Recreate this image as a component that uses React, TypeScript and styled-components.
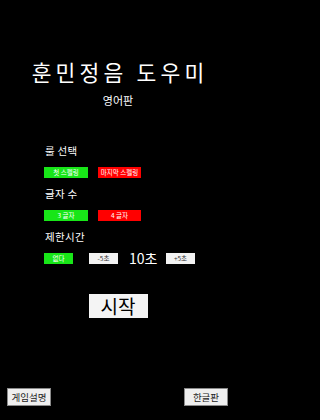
import React, { useState } from 'react';
import styled, { createGlobalStyle } from 'styled-components';

const GlobalStyle = createGlobalStyle`
  html, body {
    margin: 0;
    padding: 0;
    background: #000;
  }
  body {
    font-family: 'Noto Sans CJK KR', 'Noto Sans', sans-serif;
  }
`;

const Page = styled.div`
  width: 236px;
  height: 420px;
  background: #000;
  color: #fff;
  display: flex;
  flex-direction: column;
  box-sizing: border-box;
  overflow: hidden;
`;

const Header = styled.header`
  display: flex;
  flex-direction: column;
  align-items: center;
  padding-top: 57px;
`;

const Title = styled.h1`
  margin: 0;
  font-size: 21.5px;
  font-weight: 400;
  line-height: 30px;
  letter-spacing: 4.2px;
  padding-left: 4.2px;
  white-space: nowrap;
`;

const SubTitle = styled.div`
  margin-top: 6px;
  font-size: 11px;
  line-height: 14px;
`;

const Settings = styled.section`
  display: flex;
  flex-direction: column;
  padding: 0 0 0 44px;
  margin-top: 37px;
`;

const Label = styled.div`
  font-size: 10.5px;
  line-height: 14px;
  margin-left: 1px;
  letter-spacing: 0.3px;
`;

const Row = styled.div<{ $gap?: number }>`
  display: flex;
  align-items: center;
  gap: ${(p) => p.$gap ?? 10}px;
  margin: 8px 0 9px;
  height: 12px;
`;

const Chip = styled.button<{ $tone: 'on' | 'off' | 'plain'; $w: number }>`
  width: ${(p) => p.$w}px;
  height: 11px;
  padding: 0;
  border: none;
  font-family: inherit;
  font-size: 6.5px;
  line-height: 11px;
  white-space: nowrap;
  color: ${(p) => (p.$tone === 'plain' ? '#333' : '#fff')};
  background: ${(p) =>
    p.$tone === 'on' ? '#18e618' : p.$tone === 'off' ? '#f00' : '#f2f2f2'};
  cursor: pointer;
`;

const Seconds = styled.span`
  font-size: 14px;
  line-height: 16px;
  width: 26px;
  white-space: nowrap;
`;

const StartWrap = styled.div`
  display: flex;
  justify-content: center;
  margin-top: 21px;
`;

const StartButton = styled.button`
  width: 59px;
  height: 24px;
  padding: 0;
  border: none;
  background: #f4f4f4;
  color: #000;
  font-family: inherit;
  font-size: 19px;
  line-height: 24px;
  cursor: pointer;
`;

const Footer = styled.footer`
  margin-top: auto;
  display: flex;
  justify-content: space-between;
  padding: 0 8px 14px 7px;
`;

const FooterButton = styled.button`
  width: 44px;
  height: 18px;
  padding: 0;
  border: 1px solid #8a8a8a;
  background: #efefef;
  color: #222;
  font-family: inherit;
  font-size: 9.5px;
  line-height: 16px;
  box-sizing: border-box;
  cursor: pointer;
`;

export default function App() {
  const [rule, setRule] = useState<'first' | 'last'>('first');
  const [letters, setLetters] = useState<3 | 4>(3);
  const [limit, setLimit] = useState<boolean>(true);
  const [seconds, setSeconds] = useState<number>(10);

  return (
    <>
      <GlobalStyle />
      <Page>
        <Header>
          <Title>훈민정음 도우미</Title>
          <SubTitle>영어판</SubTitle>
        </Header>
        <Settings>
          <Label>룰 선택</Label>
          <Row>
            <Chip $w={44} $tone={rule === 'first' ? 'on' : 'off'} onClick={() => setRule('first')}>
              첫 스펠링
            </Chip>
            <Chip $w={43} $tone={rule === 'last' ? 'on' : 'off'} onClick={() => setRule('last')}>
              마지막 스펠링
            </Chip>
          </Row>
          <Label>글자 수</Label>
          <Row>
            <Chip $w={44} $tone={letters === 3 ? 'on' : 'off'} onClick={() => setLetters(3)}>
              3 글자
            </Chip>
            <Chip $w={43} $tone={letters === 4 ? 'on' : 'off'} onClick={() => setLetters(4)}>
              4 글자
            </Chip>
          </Row>
          <Label>제한시간</Label>
          <Row $gap={11}>
            <Chip $w={29} $tone={limit ? 'on' : 'off'} onClick={() => setLimit(!limit)} style={{ marginRight: 5 }}>
              없다
            </Chip>
            <Chip $w={29} $tone="plain" onClick={() => setSeconds(Math.max(5, seconds - 5))}>
              -5초
            </Chip>
            <Seconds>{seconds}초</Seconds>
            <Chip $w={29} $tone="plain" onClick={() => setSeconds(seconds + 5)}>
              +5초
            </Chip>
          </Row>
        </Settings>
        <StartWrap>
          <StartButton>시작</StartButton>
        </StartWrap>
        <Footer>
          <FooterButton>게임설명</FooterButton>
          <FooterButton>한글판</FooterButton>
        </Footer>
      </Page>
    </>
  );
}
